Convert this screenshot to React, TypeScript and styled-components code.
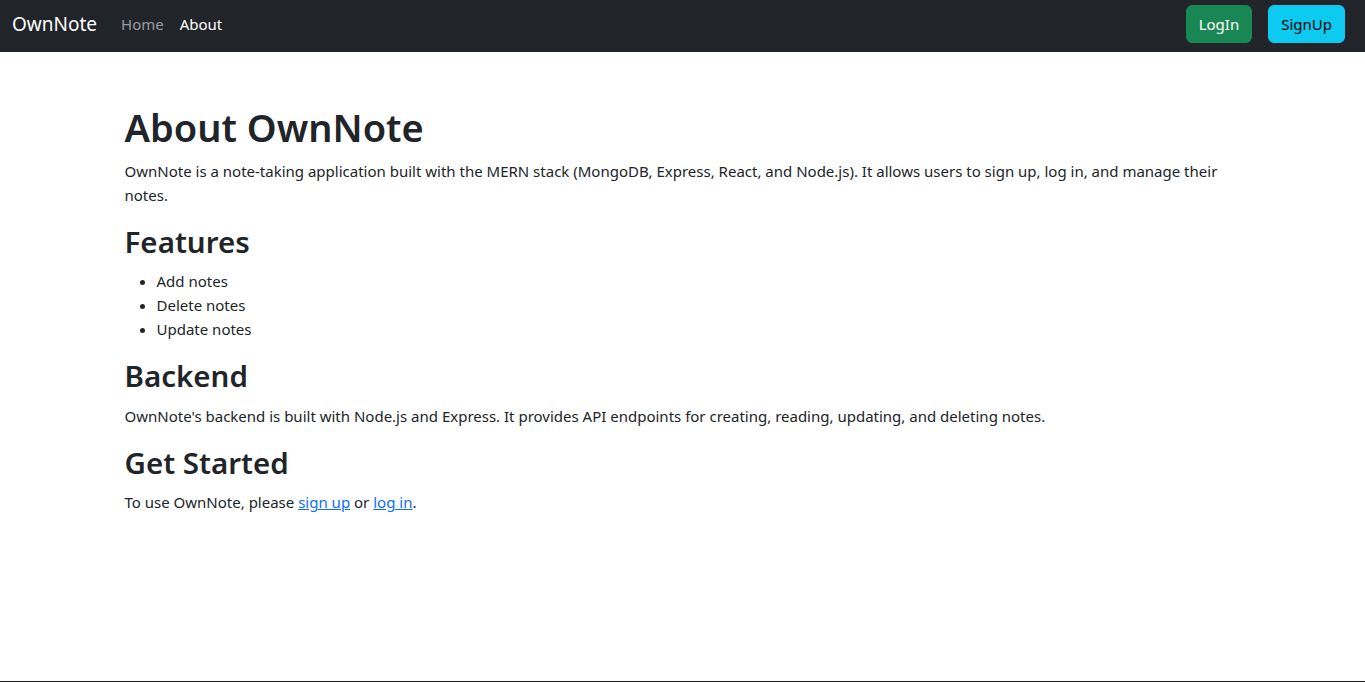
import React from "react";
import styled, { createGlobalStyle } from "styled-components";

const Global = createGlobalStyle`
  html, body { margin: 0; padding: 0; }
  body {
    font-family: "Noto Sans", "Open Sans", sans-serif;
    font-size: 15px;
    line-height: 24px;
    color: #212529;
    background: #fff;
  }
  * { box-sizing: border-box; }
`;

const Page = styled.div`
  min-height: 100vh;
  display: flex;
  flex-direction: column;
  border-bottom: 1px solid #1a1a1a;
`;

const NavBar = styled.nav`
  background: #212529;
  height: 52px;
  padding: 5px 12px 9px;
  display: flex;
  align-items: center;
`;

const Brand = styled.a`
  color: #fff;
  font-size: 19px;
  line-height: 30px;
  margin-right: 16px;
  text-decoration: none;
`;

const NavLink = styled.a<{ $active?: boolean }>`
  color: ${(p) => (p.$active ? "#fff" : "rgba(255,255,255,0.55)")};
  padding: 8px;
  text-decoration: none;
  line-height: 24px;
`;

const Spacer = styled.div`
  flex: 1;
`;

const Button = styled.button<{ $variant: "success" | "info" }>`
  font-family: inherit;
  font-size: 15px;
  line-height: 24px;
  padding: 6px 12px;
  border-radius: 6px;
  border: 1px solid ${(p) => (p.$variant === "success" ? "#198754" : "#0dcaf0")};
  background: ${(p) => (p.$variant === "success" ? "#198754" : "#0dcaf0")};
  color: ${(p) => (p.$variant === "success" ? "#fff" : "#000")};
  margin: 0 8px;
  height: 38px;
`;

const Container = styled.main`
  width: 1140px;
  margin: 51px auto 48px;
  padding: 0 12px;
`;

const H1 = styled.h1`
  font-size: 38px;
  font-weight: 600;
  line-height: 48px;
  margin: 0 0 8px;
`;

const H2 = styled.h2`
  font-size: 29.5px;
  font-weight: 600;
  line-height: 38.4px;
  margin: 0 0 8px;
`;

const P = styled.p`
  margin: 0 0 16px;
`;

const List = styled.ul`
  margin: 0 0 16px;
  padding-left: 32px;
`;

const Link = styled.a`
  color: #0d6efd;
  text-decoration: underline;
`;

export default function App() {
  return (
    <Page>
      <Global />
      <NavBar>
        <Brand href="#">OwnNote</Brand>
        <NavLink href="#">Home</NavLink>
        <NavLink href="#" $active>
          About
        </NavLink>
        <Spacer />
        <Button $variant="success">LogIn</Button>
        <Button $variant="info">SignUp</Button>
      </NavBar>
      <Container>
        <H1>About OwnNote</H1>
        <P>
          OwnNote is a note-taking application built with the MERN stack (MongoDB, Express, React, and
          Node.js). It allows users to sign up, log in, and manage their notes.
        </P>
        <H2>Features</H2>
        <List>
          <li>Add notes</li>
          <li>Delete notes</li>
          <li>Update notes</li>
        </List>
        <H2>Backend</H2>
        <P>
          OwnNote's backend is built with Node.js and Express. It provides API endpoints for creating,
          reading, updating, and deleting notes.
        </P>
        <H2>Get Started</H2>
        <P>
          To use OwnNote, please <Link href="#">sign up</Link> or <Link href="#">log in</Link>.
        </P>
      </Container>
    </Page>
  );
}
